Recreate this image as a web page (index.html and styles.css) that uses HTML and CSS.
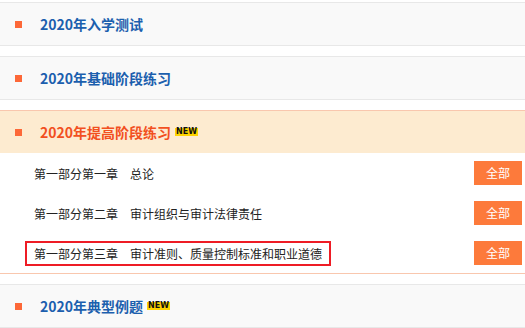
FILE: index.html
```html
<!DOCTYPE html>
<html lang="zh-CN">
<head>
    <meta charset="UTF-8">
    <meta name="viewport" content="width=device-width, initial-scale=1.0">
    <title>练习列表</title>
    <link rel="stylesheet" href="styles.css">
</head>
<body>

<div class="course-list">
    <div class="section">
        <div class="section-head">
            <span class="bullet"></span>
            <span class="section-title">2020年入学测试</span>
        </div>
    </div>

    <div class="section">
        <div class="section-head">
            <span class="bullet"></span>
            <span class="section-title">2020年基础阶段练习</span>
        </div>
    </div>

    <div class="section open">
        <div class="section-head">
            <span class="bullet"></span>
            <span class="section-title">2020年提高阶段练习</span>
            <span class="badge-new">NEW</span>
        </div>
        <ul class="chapters">
            <li class="chapter">
                <span class="chapter-name">第一部分第一章　总论</span>
                <a class="btn-all" href="#">全部</a>
            </li>
            <li class="chapter">
                <span class="chapter-name">第一部分第二章　审计组织与审计法律责任</span>
                <a class="btn-all" href="#">全部</a>
            </li>
            <li class="chapter">
                <span class="chapter-name current">第一部分第三章　审计准则、质量控制标准和职业道德</span>
                <a class="btn-all" href="#">全部</a>
            </li>
        </ul>
    </div>

    <div class="section">
        <div class="section-head">
            <span class="bullet"></span>
            <span class="section-title">2020年典型例题</span>
            <span class="badge-new">NEW</span>
        </div>
    </div>
</div>

</body>
</html>
```

FILE: styles.css
```css
/* Page base */
body {
    margin: 0;
    background: #fff;
    font-family: "Noto Sans CJK SC", "Noto Sans", sans-serif;
    color: #333;
}

.course-list {
    padding-top: 2px;
}

/* Section block */
.section {
    margin-bottom: 10px;
    border-top: 1px solid #e8e8e8;
    border-bottom: 1px solid #e8e8e8;
    background-color: #f9f9f9;
}

.section-head {
    display: flex;
    align-items: center;
    height: 42px;
    padding-left: 15px;
}

.bullet {
    width: 7px;
    height: 7px;
    margin-right: 18px;
    background-color: #fd6838;
}

.section-title {
    font-size: 14px;
    font-weight: bold;
    color: #1c5fae;
}

.badge-new {
    margin-left: 4px;
    padding: 0 1px;
    height: 8px;
    line-height: 8px;
    font-family: "DejaVu Sans", sans-serif;
    font-size: 8px;
    font-weight: bold;
    color: #111;
    background-color: #ffd400;
}

/* Opened section */
.section.open {
    border-color: #f9c7ae;
    background-color: #fff;
}

.section.open .section-head {
    background-color: #fdebd0;
}

.section.open .section-title {
    color: #f2501f;
}

/* Chapter rows */
.chapters {
    list-style: none;
    margin: 0;
    padding: 0;
}

.chapter {
    display: flex;
    align-items: center;
    justify-content: space-between;
    height: 40px;
    padding: 0 3px 0 34px;
}

.chapter-name {
    font-size: 12px;
    color: #222;
}

.chapter-name.current {
    margin-left: -9px;
    padding: 2px 7px;
    border: 2px solid #ee1c25;
}

.btn-all {
    display: block;
    width: 48px;
    height: 24px;
    line-height: 24px;
    text-align: center;
    font-size: 12px;
    color: #fff;
    text-decoration: none;
    background-color: #fd7a3b;
}
```
